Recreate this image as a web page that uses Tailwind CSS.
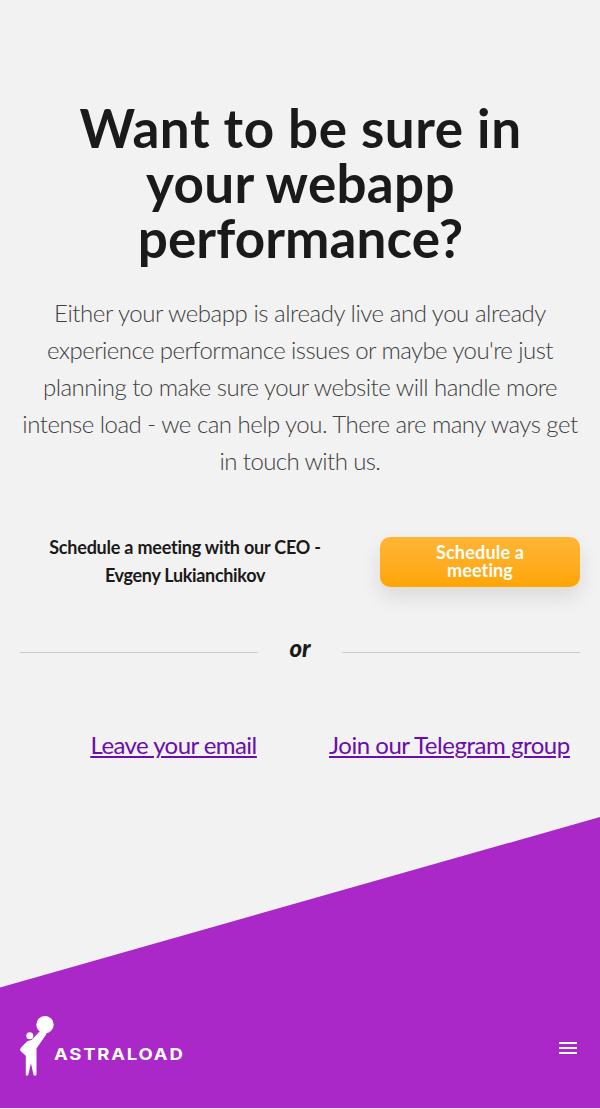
<!DOCTYPE html>
<html lang="en">
<head>
<meta charset="utf-8">
<title>Astraload</title>
<script src="https://cdn.jsdelivr.net/npm/@tailwindcss/browser@4"></script>
</head>
<body class="bg-[#f2f2f2] font-['Lato',sans-serif] text-[#1a1a1a]">
<div class="flex h-[1109px] w-[600px] flex-col overflow-hidden pt-[100px]">
  <h1 class="flex flex-col items-center text-[53px] leading-[55px] font-bold whitespace-nowrap">
    <span class="pl-px tracking-[0.55px]">Want to be sure in</span>
    <span class="pl-px tracking-[0.3px]">your webapp</span>
    <span class="pl-px tracking-[0.1px]">performance?</span>
  </h1>
  <p class="mt-[29px] flex flex-col items-center text-2xl leading-[37px] font-light whitespace-nowrap text-[#404040]">
    <span class="tracking-[-0.45px]">Either your webapp is already live and you already</span>
    <span class="tracking-[-0.57px]">experience performance issues or maybe you're just</span>
    <span class="tracking-[-0.51px]">planning to make sure your website will handle more</span>
    <span class="tracking-[-0.51px]">intense load - we can help you. There are many ways get</span>
    <span class="tracking-[-0.6px]">in touch with us.</span>
  </p>
  <div class="mt-[54px] flex h-14 items-start pl-5">
    <p class="flex w-[330px] flex-col items-center text-lg leading-7 font-bold whitespace-nowrap">
      <span class="tracking-[-0.22px]">Schedule a meeting with our CEO -</span>
      <span class="tracking-[-0.32px]">Evgeny Lukianchikov</span>
    </p>
    <a class="mt-1 ml-[30px] flex h-[50px] w-[200px] flex-col items-center rounded-[10px] bg-linear-to-b from-[#ffb534] to-[#ffa500] pt-1.5 text-lg leading-[18px] font-bold text-white shadow-[0_10px_20px_rgba(0,0,0,0.1)]">
      <span class="tracking-[0.2px]">Schedule a</span>
      <span class="tracking-[0.1px]">meeting</span>
    </a>
  </div>
  <div class="mt-[45px] flex h-[37px] justify-between px-5">
    <span class="mt-[18px] h-px w-[238px] bg-[#ccc]"></span>
    <span class="text-2xl leading-7 font-black italic">or</span>
    <span class="mt-[18px] h-px w-[238px] bg-[#ccc]"></span>
  </div>
  <div class="mt-[55px] flex h-[37px] pl-[90.500px] text-2xl leading-[37px] whitespace-nowrap text-[#6a0dad] underline decoration-2 underline-offset-2">
    <a class="w-[238.500px] tracking-[-0.57px]">Leave your email</a>
    <a class="tracking-[-0.47px]">Join our Telegram group</a>
  </div>
  <footer class="mt-[54px] flex h-[291px] flex-col justify-end bg-[#aa27c8] pb-[28px] [clip-path:polygon(0_170.5px,100%_0,100%_100%,0_100%)]">
    <div class="flex h-[64px] items-center justify-between pr-[23px] pl-5">
      <div class="flex items-center">
        <svg class="h-[64px] w-[34px]" viewBox="0 0 34 64" fill="#fff">
          <circle cx="25" cy="8.700" r="8.700"/>
          <circle cx="9.800" cy="19.700" r="3.500"/>
          <path d="M19.500 15.500L26.800 17.500L16.500 32.500V59Q14.800 60.500 13.600 59L10.900 47.300L8.300 59Q6.800 60.500 5.800 59V39.800L.6 35Q-.3 33.500.8 31.800L7 25.600Q8 24.600 10 24.500Q11.500 24.300 12.500 23Z"/>
        </svg>
        <span class="mt-[11px] origin-left scale-x-112 font-['Inter'] text-[16.500px] leading-5 font-bold tracking-[1.600px] text-white">ASTRALOAD</span>
      </div>
      <svg class="h-3 w-[18px]" viewBox="0 0 18 12" fill="#fff"><path d="M0 0h18v2H0zM0 5h18v2H0zM0 10h18v2H0z"/></svg>
    </div>
  </footer>
</div>
</body>
</html>
